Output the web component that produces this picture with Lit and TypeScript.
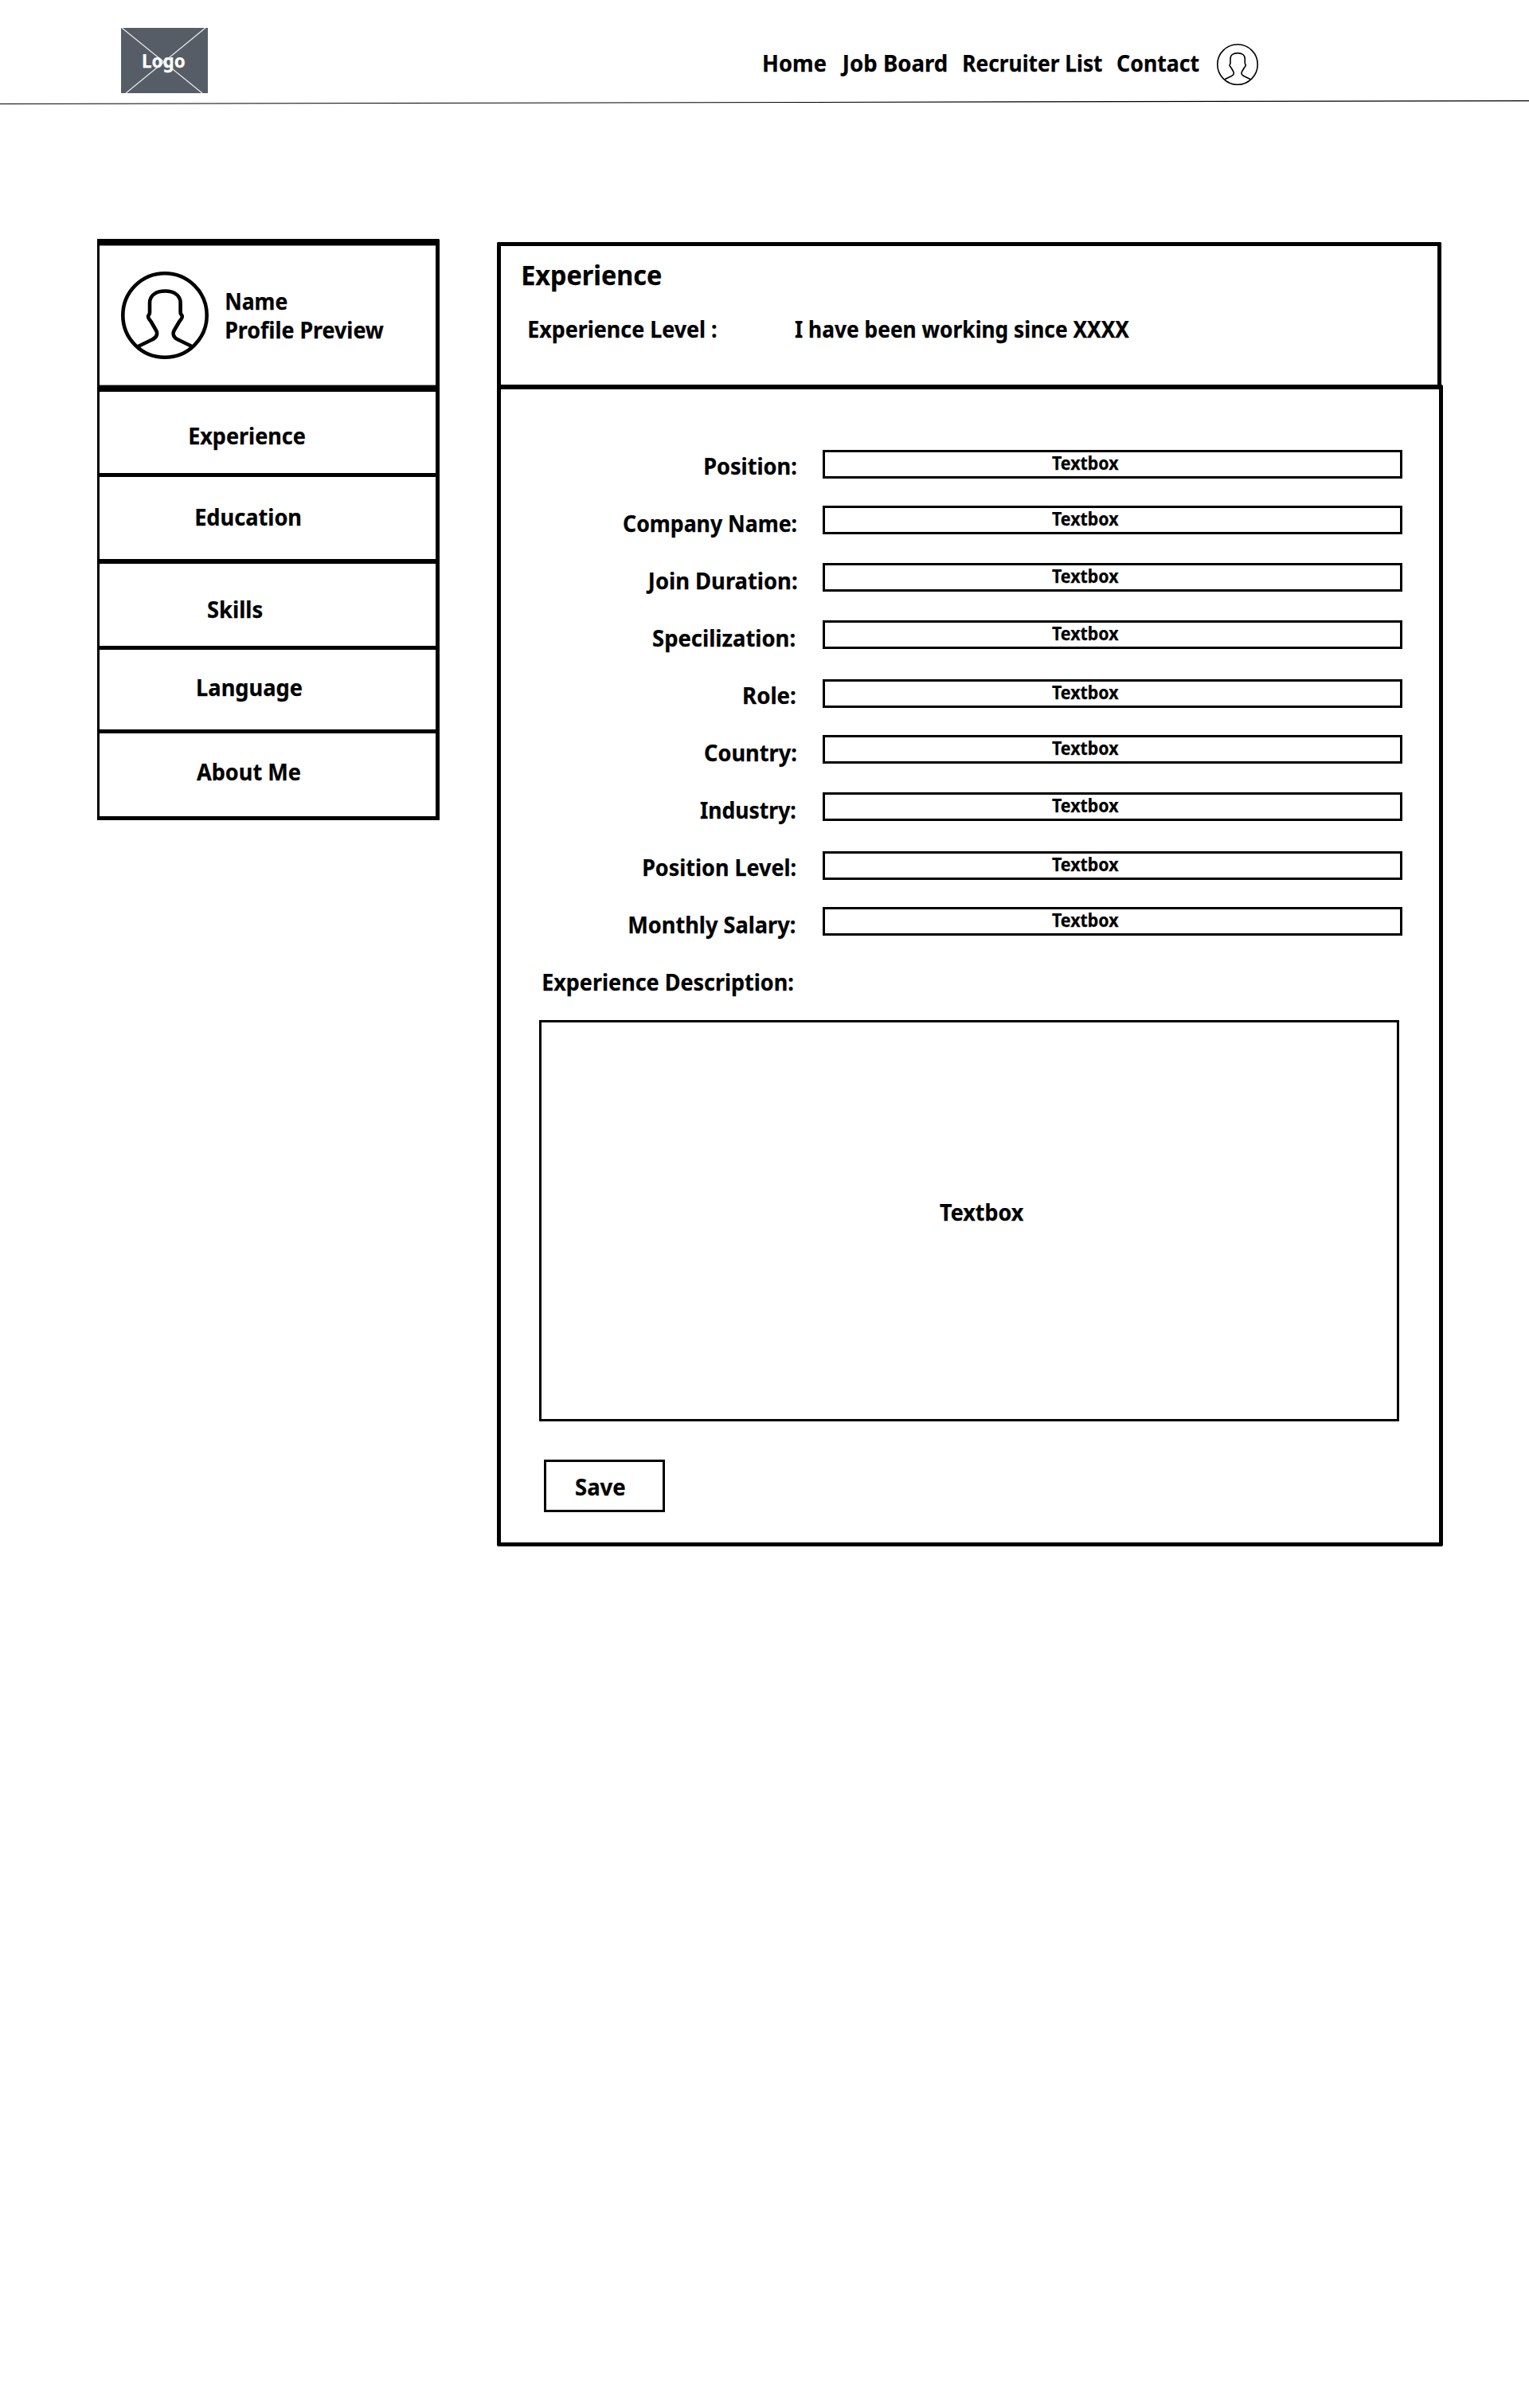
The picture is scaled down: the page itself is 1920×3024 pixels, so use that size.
import { LitElement, html, css } from "lit";
import { customElement, property } from "lit/decorators.js";
import { styleMap } from "lit/directives/style-map.js";

const FAMILY = '"Noto Sans", "Open Sans", sans-serif';
const canvas = document.createElement("canvas").getContext("2d")!;

/** One line of bold text whose glyphs are condensed to span an exact width. */
@customElement("fit-text")
class FitText extends LitElement {
  @property() text = "";
  @property({ type: Number }) width = 100;
  @property({ type: Number }) size = 29;
  @property({ type: Number }) line = 30;

  static styles = css`
    :host { display: block; flex: none; }
    .box { display: block; }
    .glyphs {
      display: inline-block;
      vertical-align: top;
      white-space: pre;
      transform-origin: 0 0;
      font-family: "Noto Sans", "Open Sans", sans-serif;
      font-weight: 700;
      -webkit-text-stroke: 0.25px currentColor;
    }
  `;

  render() {
    canvas.font = `700 ${this.size}px ${FAMILY}`;
    const m = canvas.measureText(this.text);
    const ink = m.actualBoundingBoxLeft + m.actualBoundingBoxRight;
    const s = this.width / ink;
    return html`<div class="box" style=${styleMap({ width: `${this.width}px`, height: `${this.line}px` })}>
      <span
        class="glyphs"
        style=${styleMap({
          fontSize: `${this.size}px`,
          lineHeight: `${this.line}px`,
          transform: `translateX(${m.actualBoundingBoxLeft * s}px) scaleX(${s})`,
        })}
      >${this.text}</span></div>`;
  }
}

@customElement("user-avatar")
class UserAvatar extends LitElement {
  @property({ type: Number }) size = 110;
  @property({ type: Number }) stroke = 4.6;

  static styles = css`
    :host { display: block; flex: none; }
    svg { display: block; fill: none; stroke: #000; stroke-linejoin: round; }
  `;

  render() {
    return html`<svg width=${this.size} height=${this.size} viewBox="0 0 110 110" stroke-width=${this.stroke}>
      <circle cx="55" cy="55" r=${55 - this.stroke / 2}></circle>
      <path
        d="M21.5 94 L39 85.5 C45.5 82.5 46.5 77.5 43.5 73 L38 63.5 C36.5 60.5 34 59.5 34 56.5 C34 54.5 36 54 36 51.5 V39.5 C36 29.5 44.5 24.5 55.3 24.5 C66 24.5 74.6 29.5 74.6 39.5 V51.5 C74.6 54 76.8 54.5 76.8 56.5 C76.8 59.5 74.3 60.5 72.8 63.5 L67.2 73 C64.3 77.5 65.2 82.5 71.5 85.5 L89 94"
      ></path>
    </svg>`;
  }
}

const NAV = [
  { text: "Home", width: 77.7 },
  { text: "Job Board", width: 134 },
  { text: "Recruiter List", width: 174 },
  { text: "Contact", width: 102.6 },
];

const MENU = [
  { text: "Experience", width: 144.7, height: 102, left: 113, top: 40, rule: 5 },
  { text: "Education", width: 131.3, height: 103, left: 120.7, top: 35, rule: 6 },
  { text: "Skills", width: 68.7, height: 103, left: 136, top: 42, rule: 5 },
  { text: "Language", width: 130.7, height: 100, left: 123, top: 32, rule: 5 },
  { text: "About Me", width: 129.7, height: 104, left: 121.7, top: 33, rule: 5 },
];

const FIELDS = [
  { text: "Position:", width: 114.7, end: 33, drop: 2 },
  { text: "Company Name:", width: 217, end: 33, drop: 0 },
  { text: "Join Duration:", width: 189.5, end: 33, drop: 0 },
  { text: "Specilization:", width: 178, end: 35, drop: 0 },
  { text: "Role:", width: 64.7, end: 34.3, drop: 2 },
  { text: "Country:", width: 114.7, end: 33.3, drop: 0 },
  { text: "Industry:", width: 119.7, end: 34.3, drop: 0 },
  { text: "Position Level:", width: 191, end: 34, drop: 2 },
  { text: "Monthly Salary:", width: 208.3, end: 34.7, drop: 0 },
];

@customElement("app-root")
class AppRoot extends LitElement {
  static styles = css`
    :host { display: block; width: 1920px; height: 3024px; background: #fff; color: #000; overflow: hidden; }
    * { box-sizing: border-box; }

    .header { display: flex; height: 125px; padding-left: 152px; }
    .logo { display: grid; width: 109px; height: 82px; margin-top: 35px; background: #575d67; color: #fff; }
    .logo > * { grid-area: 1 / 1; }
    .logo svg { display: block; stroke: #e6e6e6; stroke-width: 1.3; }
    .logo fit-text { margin: 29px 0 0 27.3px; }
    .nav {
      display: grid;
      grid-template-columns: 95.5px 155px 193.3px 125.3px 52px;
      align-items: start;
      margin-left: 698px;
      padding-top: 64px;
    }
    .nav user-avatar { margin-top: -9px; }
    .rule { display: block; }

    .main { display: flex; align-items: flex-start; gap: 72px; padding: 168px 0 0 122px; }

    .sidebar { width: 430px; border: solid #000; border-width: 8px 5px 0 3px; border-top-right-radius: 2px; }
    .profile {
      display: flex;
      height: 176px;
      border: solid #909090;
      border-width: 1px 0;
      padding: 32px 0 0 27px;
      gap: 21.5px;
    }
    .names { display: flex; flex-direction: column; gap: 6px; padding-top: 22px; }
    .menu { border-top: 8px solid #000; }
    .item { box-sizing: content-box; border-bottom: 5px solid #000; }

    .panel { margin-top: 4px; width: 1188px; }
    .summary { width: 1186px; height: 179px; border: 5px solid #000; border-bottom: 0; border-radius: 2px 2px 0 0; padding: 18px 0 0 28px; }
    .level { display: flex; gap: 98.5px; padding: 35px 0 0 6.5px; }
    .body { height: 1459px; border: 5px solid #000; border-radius: 0 2px 2px 2px; }
    .form { border-top: 1px solid #222; padding-top: 74px; }
    .field { display: flex; align-items: flex-start; height: 72px; }
    .label { display: flex; justify-content: flex-end; width: 404px; padding-top: 7px; }
    .input { width: 728px; height: 36px; border: 3px solid #000; padding: 1px 0 0 285px; }
    .desc { padding: 7px 0 0 53px; }
    .area { width: 1080px; height: 504px; border: 3px solid #000; margin: 33px 0 0 48px; padding: 223px 0 0 499.5px; }
    .save { width: 152px; height: 66px; border: 3px solid #000; margin: 48px 0 0 54px; padding: 16px 0 0 37.3px; }
  `;

  render() {
    return html`
      <header class="header">
        <div class="logo">
          <svg width="109" height="82" viewBox="0 0 109 82">
            <path d="M1 0 L102 82 M106 0 L6 82"></path>
          </svg>
          <fit-text text="Logo" width="53" size="23.4" line="24"></fit-text>
        </div>
        <nav class="nav">
          ${NAV.map((n) => html`<fit-text text=${n.text} width=${n.width}></fit-text>`)}
          <user-avatar size="52" stroke="3.4"></user-avatar>
        </nav>
      </header>
      <svg class="rule" width="1920" height="7" viewBox="0 0 1920 7">
        <path d="M0 5.5 L1920 1.6" stroke="#000" stroke-width="1.1"></path>
      </svg>
      <main class="main">
        <aside class="sidebar">
          <div class="profile">
            <user-avatar size="110" stroke="4.6"></user-avatar>
            <div class="names">
              <fit-text text="Name" width="76"></fit-text>
              <fit-text text="Profile Preview" width="198"></fit-text>
            </div>
          </div>
          <div class="menu">
            ${MENU.map(
              (m) => html`<div
                class="item"
                style=${styleMap({ height: `${m.height - m.top}px`, padding: `${m.top}px 0 0 ${m.left}px`, borderBottomWidth: `${m.rule}px` })}
              ><fit-text text=${m.text} width=${m.width}></fit-text></div>`
            )}
          </div>
        </aside>
        <section class="panel">
          <div class="summary">
            <fit-text text="Experience" width="173.7" size="34.6" line="36"></fit-text>
            <div class="level">
              <fit-text text="Experience Level :" width="235.6"></fit-text>
              <fit-text text="I have been working since XXXX" width="420.5"></fit-text>
            </div>
          </div>
          <div class="body">
            <div class="form">
              ${FIELDS.map(
                (f) => html`<div class="field">
                  <div class="label" style=${styleMap({ paddingRight: `${f.end}px` })}>
                    <fit-text text=${f.text} width=${f.width}></fit-text>
                  </div>
                  <div class="input" style=${styleMap({ marginTop: `${f.drop}px` })}>
                    <fit-text text="Textbox" width="84" size="23.4" line="24"></fit-text>
                  </div>
                </div>`
              )}
              <div class="desc"><fit-text text="Experience Description:" width="313.7"></fit-text></div>
              <div class="area"><fit-text text="Textbox" width="105.5"></fit-text></div>
              <div class="save"><fit-text text="Save" width="61.4"></fit-text></div>
            </div>
          </div>
        </section>
      </main>
    `;
  }
}
